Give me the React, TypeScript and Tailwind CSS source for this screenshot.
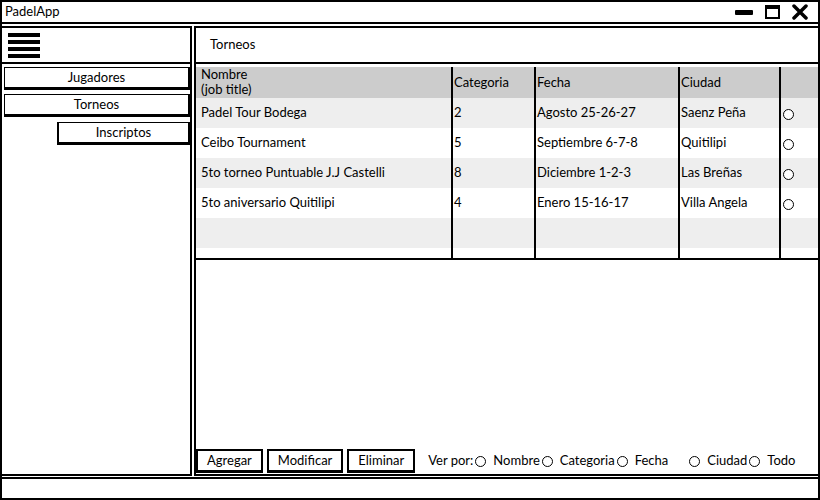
import { useState } from "react";

const rows = [
  { nombre: "Padel Tour Bodega", cat: "2", fecha: "Agosto 25-26-27", ciudad: "Saenz Peña" },
  { nombre: "Ceibo Tournament", cat: "5", fecha: "Septiembre 6-7-8", ciudad: "Quitilipi" },
  { nombre: "5to torneo Puntuable J.J Castelli", cat: "8", fecha: "Diciembre 1-2-3", ciudad: "Las Breñas" },
  { nombre: "5to aniversario Quitilipi", cat: "4", fecha: "Enero 15-16-17", ciudad: "Villa Angela" },
  { nombre: "", cat: "", fecha: "", ciudad: "" },
  { nombre: "", cat: "", fecha: "", ciudad: "" },
];

const cols = "grid grid-cols-[255px_83px_144px_101px_1fr]";

function Radio() {
  return <span className="inline-block h-[11px] w-[11px] shrink-0 rounded-full border border-black bg-white" />;
}

function NavButton({ label, className = "" }: { label: string; className?: string }) {
  return (
    <div
      className={`flex h-[23px] items-center justify-center border border-black border-b-[3px] border-r-[2px] bg-white text-[13px] ${className}`}
    >
      {label}
    </div>
  );
}

function ActionButton({ label }: { label: string }) {
  return (
    <button className="h-[24px] border-2 border-black border-b-[3px] bg-white px-[9px] text-[13px] leading-none">
      {label}
    </button>
  );
}

export default function App() {
  const [filter, setFilter] = useState("");
  return (
    <div className="flex h-[500px] w-[820px] flex-col border-2 border-black bg-white text-black font-['Lato','Liberation_Sans',sans-serif]">
      {/* title bar */}
      <div className="flex h-[22px] shrink-0 items-center justify-between border-b-2 border-black pl-[3px] pr-[10px] text-[13px]">
        <span>PadelApp</span>
        <div className="flex items-center gap-[12px]">
          <span className="mt-[1px] block h-[5px] w-[18px] rounded-[1px] bg-black" />
          <span className="block h-[14px] w-[15px] border-2 border-t-[4px] border-black" />
          <svg width="16" height="16" viewBox="0 0 16 16">
            <path d="M2 2 L14 14 M14 2 L2 14" stroke="black" strokeWidth="3.5" strokeLinecap="round" />
          </svg>
        </div>
      </div>

      <div className="flex min-h-0 flex-1 gap-[2px] pt-[2px]">
        {/* left column */}
        <div className="flex w-[190px] shrink-0 flex-col">
          <div className="flex h-[38px] shrink-0 flex-col justify-center gap-[3px] border-2 border-l-0 border-black pl-[6px]">
            <span className="block h-[4px] w-[32px] bg-black" />
            <span className="block h-[4px] w-[32px] bg-black" />
            <span className="block h-[4px] w-[32px] bg-black" />
            <span className="block h-[4px] w-[32px] bg-black" />
          </div>
          <div className="flex flex-1 flex-col gap-[4px] border-2 border-t-0 border-l-0 border-black pt-[3px] pl-[2px]">
            <NavButton label="Jugadores" />
            <NavButton label="Torneos" />
            <NavButton label="Inscriptos" className="ml-[53px] mt-[1px] border-l-2" />
          </div>
        </div>

        {/* right column */}
        <div className="flex min-w-0 flex-1 flex-col">
          <div className="flex h-[38px] shrink-0 items-center border-2 border-r-0 border-black pl-[14px] text-[13px]">
            Torneos
          </div>
          <div className="flex flex-1 flex-col border-2 border-t-0 border-r-0 border-black">
            <div className="border-b-2 border-black pt-[3px] text-[13px]">
              <div className={`${cols} h-[31px] bg-[#cccccc] leading-[15px]`}>
                <div className="px-[5px]">
                  <div>Nombre</div>
                  <div>(job title)</div>
                </div>
                <div className="flex items-center border-l-2 border-black px-[1px]">Categoria</div>
                <div className="flex items-center border-l-2 border-black px-[1px]">Fecha</div>
                <div className="flex items-center border-l-2 border-black px-[1px]">Ciudad</div>
                <div className="border-l-2 border-black" />
              </div>
              {rows.map((r, i) => (
                <div
                  key={i}
                  className={`${cols} ${i === 5 ? "h-[10px]" : "h-[30px]"} ${i % 2 === 0 ? "bg-[#eeeeee]" : "bg-white"}`}
                >
                  <div className="flex items-center px-[5px]">{r.nombre}</div>
                  <div className="flex items-center border-l-2 border-black px-[1px]">{r.cat}</div>
                  <div className="flex items-center border-l-2 border-black px-[1px]">{r.fecha}</div>
                  <div className="flex items-center border-l-2 border-black px-[1px]">{r.ciudad}</div>
                  <div className="flex items-center border-l-2 border-black pl-[2px] pt-[2px]">
                    {r.nombre && <Radio />}
                  </div>
                </div>
              ))}
            </div>

            <div className="flex-1" />

            <div className="flex items-center gap-[4px] pb-[1px] text-[13px]">
              <ActionButton label="Agregar" />
              <ActionButton label="Modificar" />
              <ActionButton label="Eliminar" />
              <div className="ml-[9px] flex items-center">
                <span>Ver por:</span>
                {["Nombre", "Categoria", "Fecha", "Ciudad", "Todo"].map((o) => (
                  <label
                    key={o}
                    onClick={() => setFilter(o)}
                    className={`flex items-center gap-[7px] ${o === "Ciudad" ? "ml-[21px]" : "ml-[2px]"}`}
                  >
                    <Radio />
                    <span className={filter === o ? "font-bold" : ""}>{o}</span>
                  </label>
                ))}
              </div>
            </div>
          </div>
        </div>
      </div>

      {/* status bar */}
      <div className="mt-[1px] h-[21px] shrink-0 border-t-2 border-black" />
    </div>
  );
}
